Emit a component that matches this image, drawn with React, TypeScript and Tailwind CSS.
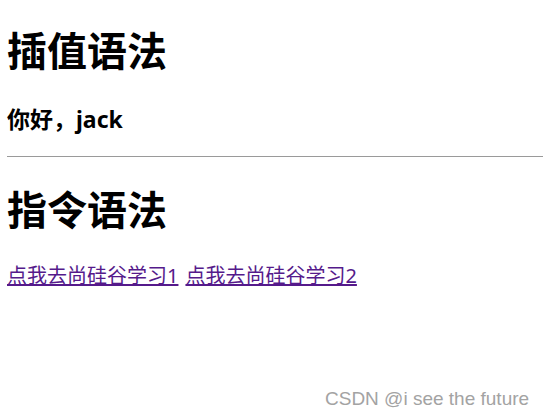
export default function App() {
  return (
    <div className="relative h-[415px] w-[543px] overflow-hidden bg-white text-black">
      <div
        className="flex flex-col pl-[7px] pt-[24px]"
        style={{ fontFamily: '"Noto Sans", "Noto Sans CJK SC", sans-serif' }}
      >
        <h1 className="h-[53px] text-[40px] font-bold leading-[53px]">插值语法</h1>
        <h3 className="mt-[27px] h-[31px] text-[23px] font-bold leading-[31px]">你好，jack</h3>
        <hr className="mt-[21px] border-t border-[#9a9a9a]" />
        <h1 className="mt-[26px] h-[53px] text-[40px] font-bold leading-[53px]">指令语法</h1>
        <div className="mt-[27px] flex h-[26px] items-center gap-[7px] text-[20px] leading-[26px]">
          <a href="#" className="text-[#551a8b] underline">点我去尚硅谷学习1</a>
          <a href="#" className="text-[#551a8b] underline">点我去尚硅谷学习2</a>
        </div>
      </div>
      <div
        className="absolute left-[325px] top-[388px] text-[19px] leading-[22px] text-[#a3a3a3]"
        style={{ fontFamily: '"Liberation Sans", Arial, sans-serif' }}
      >
        CSDN @i see the future
      </div>
    </div>
  );
}
